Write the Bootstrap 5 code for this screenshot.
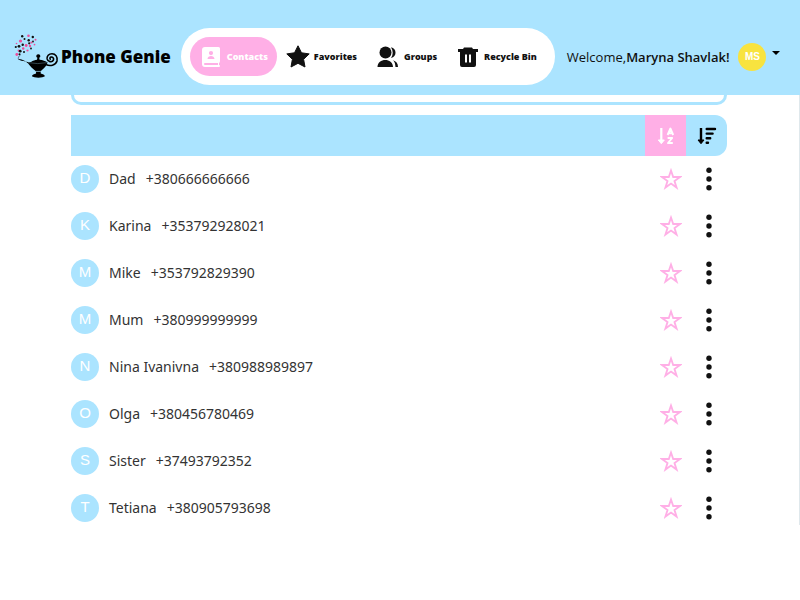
<!DOCTYPE html>
<html lang="en">
<head>
<meta charset="utf-8">
<meta name="viewport" content="width=device-width, initial-scale=1">
<title>Phone Genie</title>
<link href="https://cdn.jsdelivr.net/npm/bootstrap@5.3.0/dist/css/bootstrap.min.css" rel="stylesheet">
<style>
:root { --sky: #abe4ff; --rose: #ffafe6; --ink: #111; }
body { font-family: "Noto Sans", "Open Sans", sans-serif; font-size: 14px; line-height: 20px; color: #333; background: #fff; }
svg { display: block; flex: none; }
.topbar { background: var(--sky); min-height: 95px; padding: 28px 20px 10px 14px; }
.brand { color: #000; font: 800 17px/20px "Open Sans", sans-serif; }
.menu { background: #fff; border-radius: 29px; padding: 9px 18px 9px 9px; gap: 9px; margin-left: 10px; }
.menu a { height: 39px; border-radius: 20px; color: var(--ink); font: 800 9px/14px "Open Sans", sans-serif; gap: 4px; }
.menu a.active { background: var(--rose); color: #fff; padding: 0 9px 0 12px; gap: 7px; }
.menu .menu-gap { margin-left: 11px; gap: 5px; }
.welcome { color: #111; margin-left: 12px; font: 13px/20px "Open Sans", sans-serif; }
.welcome strong { font-weight: 600; }
.avatar { width: 28px; height: 28px; flex: none; color: #fff; font-family: "Liberation Sans", Arial, sans-serif; }
.avatar-user { background: #f8e33f; font-size: 10px; font-weight: 700; }
.avatar-contact { background: var(--sky); font-size: 15px; padding-bottom: 2px; }
.user-menu { gap: 6px; margin-left: 9px; }
.user-menu .caret { margin-bottom: 8px; }
.page { border-right: 1px solid #dfe8ec; padding: 0 72px 3px 71px; }
.search { display: block; width: 100%; height: 10px; border: 3px solid var(--sky); border-top: 0; border-radius: 0 0 10px 10px; padding: 0; outline: 0; }
.toolbar { background: var(--sky); border-radius: 0 12px 12px 0; height: 41px; margin-top: 10px; }
.toolbar button { width: 41px; height: 41px; color: #000; }
.toolbar button.active { background: var(--rose); color: #fff; }
.plain { border: 0; background: none; padding: 0; }
.contacts { padding-top: 9px; gap: 19px; }
.contacts li { height: 28px; }
.person { margin-left: 10px; gap: 10px; line-height: 22px; }
.actions { gap: 19px; padding-right: 10px; }
</style>
<script src="https://cdn.jsdelivr.net/npm/bootstrap@5.3.0/dist/js/bootstrap.bundle.min.js"></script>
</head>
<body>
<svg class="d-none" xmlns="http://www.w3.org/2000/svg">
  <symbol id="star" viewBox="0 0 24 24"><path d="M12 2.800l2.400 7h7.400l-6 4.400 2.300 7.200-6.100-4.400-6.100 4.400 2.300-7.200-6-4.400h7.400z" fill="none" stroke="#ffafe6" stroke-width="2"/></symbol>
  <symbol id="dots" viewBox="0 0 16 24"><g fill="#111"><circle cx="8" cy="3.2" r="2.700"/><circle cx="8" cy="12" r="2.700"/><circle cx="8" cy="20.800" r="2.700"/></g></symbol>
</svg>
<header class="topbar sticky-top d-flex align-items-start">
  <div class="d-flex align-items-center w-100">
  <a href="#" class="brand d-flex align-items-center text-decoration-none text-nowrap">
    <svg width="47" height="46" viewBox="0 0 47 46" aria-hidden="true">
      <path d="M4 25c2-.4 4 .4 6 1.600 2 1.200 4 2 7 1.500 2-1.500 4-2 6-2.300l.4-2.100-1-.6c-.4-1.700.3-2.800 1.900-2.800s2.300 1.100 1.900 2.800l-1 .6.4 2.100c3 .3 6 1.400 8 2.800-1 3-2.500 5-4.800 6.700-2 1.400-2.200 2.800-2.100 4.200 2 .6 4 1.300 4.200 2.800-2 1.800-11 1.800-13 0 .2-1.500 2.200-2.200 4.200-2.800.1-1.400-.3-2.700-2.300-3.900-3-2-4.500-5.600-7.800-7.800C8.500 26.500 6 27 4 25z" fill="#000"/>
      <path d="M20.500 37.400h8.500" stroke="#abe4ff" stroke-width=".7"/><path d="M14 28.600q10 2 19 0" stroke="#678b9b" stroke-width=".5" fill="none"/>
      <path d="M32 30.500c4 2 9.500 1 11-3.500 1-4-1.500-7.300-5-7.300-3.200 0-5.300 2.500-4.900 5.200.5 2.900 5.100 3.900 6.300 1.300.8-2-.8-3.500-2.500-3.100-1.400.4-1.200 2.200 0 2.300" fill="none" stroke="#000" stroke-width="1.600"/>
      <path d="M4.500 25.500C3.600 23.500 5 22 6.500 21" fill="none" stroke="#446" stroke-width=".7"/>
      <g fill="#ed4d9b"><circle cx="6.500" cy="7" r="1.600"/><circle cx="14.500" cy="1.800" r="1.300"/><circle cx="12.200" cy="11.500" r="1.400"/><circle cx="16" cy="12" r="1.200"/><circle cx="17.500" cy="8.500" r="1.100"/><circle cx="21.500" cy="5.800" r="1"/><circle cx="20.500" cy="10.600" r=".9"/><circle cx="9.200" cy="14.500" r="1.200"/><circle cx="2.800" cy="20.500" r="1.400"/><circle cx="13.500" cy="16.500" r="1.100"/><circle cx="4.500" cy="16.500" r=".9"/><circle cx="2.500" cy="9.500" r=".8"/></g>
      <g fill="#111"><circle cx="8.200" cy="2.300" r="1.200"/><circle cx="14.700" cy="6.200" r="1.200"/><circle cx="18.800" cy="3" r="1.200"/><circle cx="5" cy="12.300" r="1.400"/><circle cx="1.800" cy="13" r="1.100"/><circle cx="8.700" cy="10.700" r="1.200"/><circle cx="15.200" cy="9.300" r="1.100"/><circle cx="19" cy="7.500" r=".9"/><circle cx="6.200" cy="17.200" r="1.400"/><circle cx="10" cy="18" r="1"/><circle cx="17" cy="14.500" r=".9"/><circle cx="10.500" cy="5" r="1"/><circle cx="5.500" cy="20.300" r="1"/></g>
    </svg>
    <span>Phone Genie</span>
  </a>
  <nav class="menu d-flex align-items-center text-nowrap" aria-label="Main">
    <a href="#" class="active d-flex align-items-center text-decoration-none" aria-current="page">
      <svg width="18" height="20" viewBox="0 0 18 20" aria-hidden="true"><path fill="#fff" fill-rule="evenodd" d="M3 0h13.500Q18 0 18 1.500V14Q18 15.500 17 16v2q1 0 1 1t-1 1H3Q0 20 0 17V3Q0 0 3 0zM9 4a2.100 2.100 0 1 0 0 4.200A2.100 2.100 0 0 0 9 4zM5.500 12h7c0-4-7-4-7 0zM3 16q-1 0-1 1t1 1h13v-2z"/></svg>
      <span>Contacts</span>
    </a>
    <a href="#" class="d-flex align-items-center text-decoration-none">
      <svg width="24" height="23" viewBox="0 0 24 23" aria-hidden="true"><path fill="#111" stroke="#111" stroke-linejoin="round" d="M12 .8l3.500 7 7.700 1.100-5.600 5.400 1.400 7.700-7-3.700L5 22l1.400-7.700L.8 8.900l7.700-1.100z"/></svg>
      <span>Favorites</span>
    </a>
    <a href="#" class="menu-gap d-flex align-items-center text-decoration-none">
      <svg width="22" height="22" viewBox="0 0 22 22" aria-hidden="true"><g fill="#111"><circle cx="8.500" cy="6.500" r="6"/><path d="M.5 21c0-9.500 15.500-9.500 15.500 0zM14 1.200c6 1 6 9.800 0 10.800 2.300-3.500 2.300-7.300 0-10.800zM16 14.300c3 .8 5 3.200 5 6.700h-2.500c-.2-3-.8-5-2.500-6.700z"/></g></svg>
      <span>Groups</span>
    </a>
    <a href="#" class="menu-gap d-flex align-items-center text-decoration-none">
      <svg width="22" height="22" viewBox="0 0 22 22" aria-hidden="true"><path fill="#111" fill-rule="evenodd" d="M1 3h5l1-1.500h8L16 3h5v3h-2v13q0 2-2 2H5q-2 0-2-2V6H1zM8 8.500v8h2v-8zm4 0v8h2v-8z"/></svg>
      <span>Recycle Bin</span>
    </a>
  </nav>
  <div class="welcome text-nowrap">Welcome,<strong>Maryna Shavlak!</strong></div>
  <button type="button" class="plain user-menu d-flex align-items-center" aria-label="Account menu">
    <span class="avatar avatar-user rounded-circle d-flex align-items-center justify-content-center">MS</span>
    <svg class="caret" width="8" height="4" viewBox="0 0 8 4" aria-hidden="true"><path d="M0 0h8L4 4z" fill="#000"/></svg>
  </button>
  </div>
</header>
<main class="page">
  <input type="search" class="search" aria-label="Search contacts">
  <div class="toolbar d-flex justify-content-end overflow-hidden">
    <button type="button" class="plain active d-flex align-items-center justify-content-center" aria-label="Sort by name">
      <svg width="18" height="18" viewBox="0 0 18 18" aria-hidden="true"><g fill="none" stroke="currentColor" stroke-linejoin="round"><path stroke-width="2.200" d="M4.300 1v13"/><path fill="currentColor" stroke-width="1" d="M1.300 13h6l-3 3.700z"/><path stroke-width="1.900" d="M10.600 8l2.800-6.500L16.200 8M12 6.300h3M10.600 11h4.600l-4.200 5h4.800"/></g></svg>
    </button>
    <button type="button" class="plain d-flex align-items-center justify-content-center" aria-label="Sort by frequency">
      <svg width="20" height="18" viewBox="0 0 20 18" aria-hidden="true"><g fill="none" stroke="currentColor" stroke-linejoin="round"><path stroke-width="2.400" d="M4 1v13"/><path fill="currentColor" stroke-width="1" d="M1 13h6l-3 3.700z"/><path stroke-width="2.400" stroke-linecap="round" d="M9.700 2h8.300M9.700 6.600h5.900M9.700 11.200h3.500M9.700 15.800h1.300"/></g></svg>
    </button>
  </div>
  <ul class="contacts list-unstyled d-flex flex-column mb-0" id="contacts"></ul>
</main>
<script>
const people = [["Dad","+380666666666"],["Karina","+353792928021"],["Mike","+353792829390"],["Mum","+380999999999"],["Nina Ivanivna","+380988989897"],["Olga","+380456780469"],["Sister","+37493792352"],["Tetiana","+380905793698"]];
document.getElementById("contacts").innerHTML = people.map(([name, phone]) => `
<li class="d-flex align-items-center">
  <span class="avatar avatar-contact rounded-circle d-flex align-items-center justify-content-center">${name[0]}</span>
  <div class="person d-flex"><span>${name}</span><span>${phone}</span></div>
  <div class="actions d-flex align-items-center ms-auto">
    <button type="button" class="plain" aria-label="Add ${name} to favorites"><svg width="22" height="22"><use href="#star"/></svg></button>
    <button type="button" class="plain" aria-label="Actions for ${name}"><svg width="16" height="24"><use href="#dots"/></svg></button>
  </div>
</li>`).join("");
</script>
</body>
</html>
